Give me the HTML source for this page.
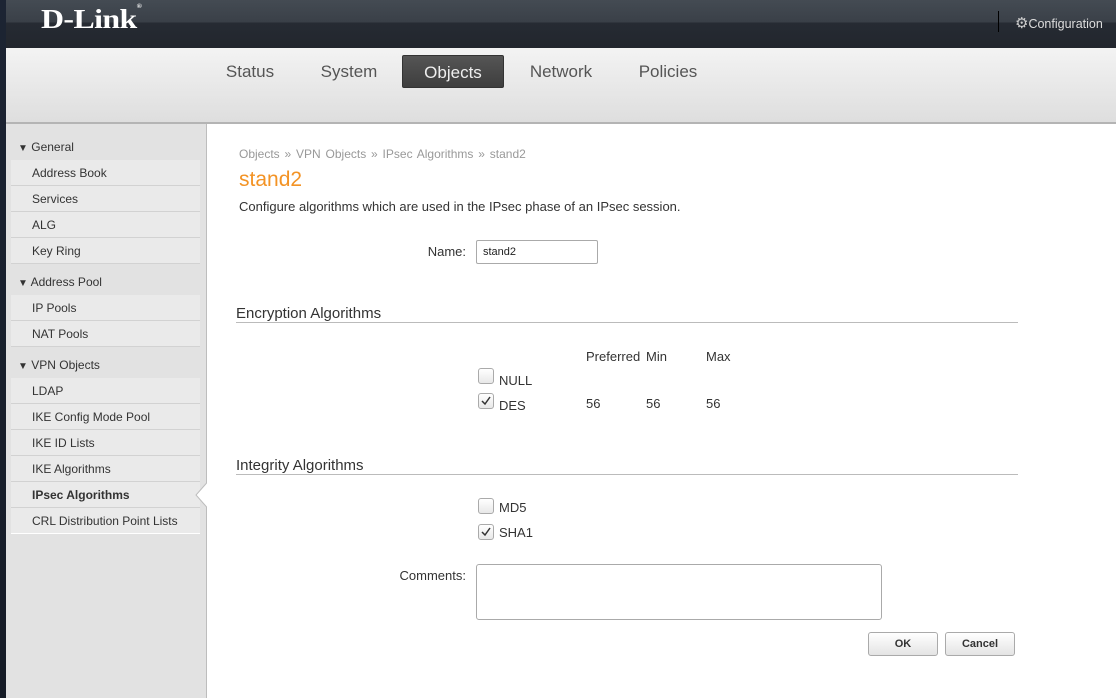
<!DOCTYPE html>
<html><head><style>
*{margin:0;padding:0;box-sizing:border-box}
body{width:1116px;height:698px;overflow:hidden;font-family:"Liberation Sans",sans-serif;background:#fff;position:relative}
.abs{position:absolute}
#left{left:0;top:0;width:6px;height:698px;background:linear-gradient(#1c2433,#151b26)}
#hdr{left:6px;top:0;width:1110px;height:48px;background:linear-gradient(#444b53 0,#3a4048 22px,#262b33 23px,#22262d 48px)}
#nav{left:6px;top:48px;width:1110px;height:76px;background:linear-gradient(#f3f3f3,#dedede);border-bottom:2px solid #b4b4b4}
.tab{position:absolute;top:55px;height:33px;line-height:33px;font-size:17px;color:#555;text-align:center}
#side{left:6px;top:124px;width:201px;height:574px;background:#e2e2e2;border-right:1px solid #bdbdbd}
.sh{position:absolute;left:6px;width:194px;height:26px;font-size:12px;color:#333;line-height:26px;padding-left:12px}
.si{position:absolute;left:11px;width:189px;height:26px;font-size:12px;color:#333;line-height:26px;padding-left:21px;background:#eaeaea;border-bottom:1px solid #d2d2d2}
.t{position:absolute;font-size:12px;color:#333;white-space:nowrap}
.m{font-size:13px}
.cb{position:absolute;width:16px;height:16px;border:1px solid #aaa;border-radius:3px;background:linear-gradient(#fff,#e8e8e8)}
.cb svg{position:absolute;left:1px;top:1px}
.hr{position:absolute;left:236px;width:782px;height:1px;background:#bbb}
.btn{position:absolute;top:632px;height:24px;border:1px solid #aaa;border-radius:3px;background:linear-gradient(#fff,#e4e4e4);font-size:11px;font-weight:bold;color:#333;text-align:center;line-height:22px}
</style></head><body>
<div id="left" class="abs"></div>
<div id="hdr" class="abs"></div>
<div class="abs" style="left:41px;top:4px;font-family:'Liberation Serif',serif;font-weight:bold;font-size:27px;color:#fff;letter-spacing:-0.5px;transform:scaleX(1.18);transform-origin:left">D-Link<span style="font-size:6px;vertical-align:top">®</span></div>
<div class="abs" style="left:998px;top:11px;width:1px;height:21px;background:#000"></div>
<div class="abs" style="left:1015px;top:14px;font-size:12.5px;color:#ddd"><span style="font-size:15px;color:#ccc">⚙</span>Configuration</div>
<div id="nav" class="abs"></div>
<div class="tab" style="left:222px;width:56px">Status</div>
<div class="tab" style="left:316px;width:66px">System</div>
<div class="tab" style="left:402px;width:102px;background:linear-gradient(#555,#3e3e3e);color:#eee;border-radius:2px;border:1px solid #333">Objects</div>
<div class="tab" style="left:526px;width:70px">Network</div>
<div class="tab" style="left:634px;width:68px">Policies</div>
<div id="side" class="abs"></div>
<div class="sh" style="top:134px"><span style="font-size:10px">▼</span> General</div>
<div class="si" style="top:160px">Address Book</div>
<div class="si" style="top:186px">Services</div>
<div class="si" style="top:212px">ALG</div>
<div class="si" style="top:238px">Key Ring</div>
<div class="sh" style="top:269px"><span style="font-size:10px">▼</span> Address Pool</div>
<div class="si" style="top:295px">IP Pools</div>
<div class="si" style="top:321px">NAT Pools</div>
<div class="sh" style="top:352px"><span style="font-size:10px">▼</span> VPN Objects</div>
<div class="si" style="top:378px">LDAP</div>
<div class="si" style="top:404px">IKE Config Mode Pool</div>
<div class="si" style="top:430px">IKE ID Lists</div>
<div class="si" style="top:456px">IKE Algorithms</div>
<div class="si" style="top:482px;font-weight:bold">IPsec Algorithms</div>
<div class="si" style="top:508px;border-bottom:1px solid #fff">CRL Distribution Point Lists</div>
<svg class="abs" style="left:195px;top:482px" width="13" height="26"><path d="M12.5 0 L1 13 L12.5 26 Z" fill="#fff" stroke="#bdbdbd"/><rect x="12" y="0" width="2" height="26" fill="#fff"/></svg>
<div class="t" style="left:239px;top:147px;color:#999;word-spacing:1.5px">Objects » VPN Objects » IPsec Algorithms » stand2</div>
<div class="t" style="left:239px;top:168px;font-size:21px;color:#f39325">stand2</div>
<div class="t m" style="left:239px;top:199px">Configure algorithms which are used in the IPsec phase of an IPsec session.</div>
<div class="t m" style="right:650px;top:244px">Name:</div>
<div class="abs" style="left:476px;top:240px;width:122px;height:24px;border:1px solid #aaa;border-radius:2px;font-size:11px;padding:5px 6px;color:#222">stand2</div>
<div class="t" style="left:236px;top:305px;font-size:15px">Encryption Algorithms</div>
<div class="hr" style="top:322px"></div>
<div class="t m" style="left:586px;top:349px">Preferred</div>
<div class="t m" style="left:646px;top:349px">Min</div>
<div class="t m" style="left:706px;top:349px">Max</div>
<div class="cb" style="left:478px;top:368px"></div>
<div class="t m" style="left:499px;top:373px">NULL</div>
<div class="cb" style="left:478px;top:393px"><svg width="12" height="12"><path d="M2 6 L5 9 L10 2" stroke="#333" stroke-width="1.5" fill="none"/></svg></div>
<div class="t m" style="left:499px;top:398px">DES</div>
<div class="t m" style="left:586px;top:396px">56</div>
<div class="t m" style="left:646px;top:396px">56</div>
<div class="t m" style="left:706px;top:396px">56</div>
<div class="t" style="left:236px;top:457px;font-size:15px">Integrity Algorithms</div>
<div class="hr" style="top:474px"></div>
<div class="cb" style="left:478px;top:498px"></div>
<div class="t m" style="left:499px;top:500px">MD5</div>
<div class="cb" style="left:478px;top:524px"><svg width="12" height="12"><path d="M2 6 L5 9 L10 2" stroke="#333" stroke-width="1.5" fill="none"/></svg></div>
<div class="t m" style="left:499px;top:525px">SHA1</div>
<div class="t m" style="right:650px;top:568px">Comments:</div>
<div class="abs" style="left:476px;top:564px;width:406px;height:56px;border:1px solid #aaa;border-radius:3px"></div>
<div class="btn" style="left:868px;width:70px">OK</div>
<div class="btn" style="left:945px;width:70px">Cancel</div>
</body></html>
